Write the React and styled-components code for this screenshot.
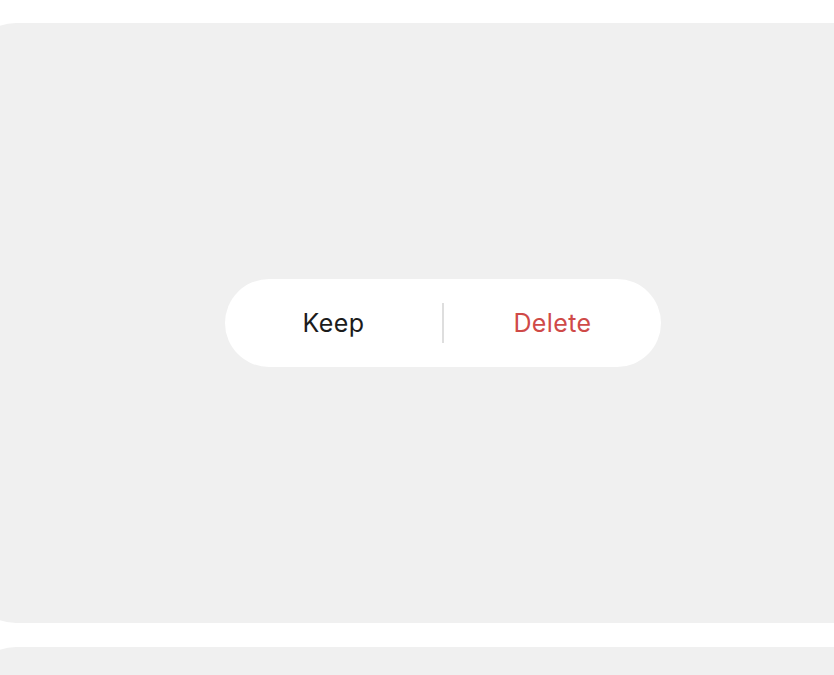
import React from 'react';
import styled, { createGlobalStyle } from 'styled-components';

const GlobalStyle = createGlobalStyle`
  html, body {
    margin: 0;
    padding: 0;
    background: #ffffff;
    overflow: hidden;
  }
  body {
    font-family: Inter, "Noto Sans", sans-serif;
  }
`;

const Page = styled.div`
  display: flex;
  flex-direction: column;
  gap: 24px;
  padding-top: 23px;
  width: 834px;
  height: 675px;
  overflow: hidden;
`;

const Panel = styled.div`
  display: flex;
  align-items: center;
  justify-content: center;
  flex-shrink: 0;
  width: 950px;
  height: 600px;
  margin-left: -32px;
  background: #f0f0f0;
  border-radius: 48px;
`;

const ActionPill = styled.div`
  display: flex;
  align-items: center;
  width: 436px;
  height: 88px;
  background: #ffffff;
  border-radius: 44px;
`;

const ActionButton = styled.button`
  flex: 1;
  height: 100%;
  border: none;
  background: transparent;
  font-family: Inter, "Noto Sans", sans-serif;
  font-size: 25px;
  letter-spacing: 0.4px;
  font-weight: 400;
  color: ${(p) => (p.$danger ? '#cf4a48' : '#1c1c1c')};
  cursor: pointer;
  padding: 0;
`;

const Divider = styled.div`
  width: 2px;
  height: 40px;
  background: #dedede;
`;

const App = () => {
  return (
    <>
      <GlobalStyle />
      <Page>
        <Panel>
          <ActionPill>
            <ActionButton>Keep</ActionButton>
            <Divider />
            <ActionButton $danger>Delete</ActionButton>
          </ActionPill>
        </Panel>
        <Panel />
      </Page>
    </>
  );
};

export default App;
